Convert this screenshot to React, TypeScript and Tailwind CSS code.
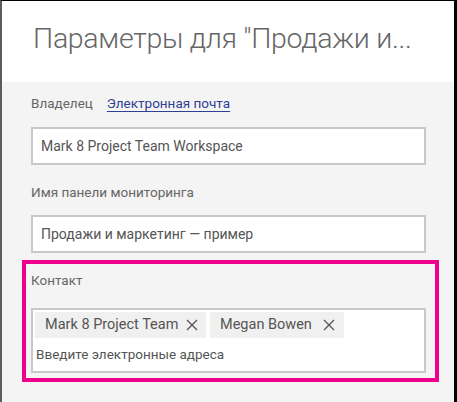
import React from "react";

function CloseIcon() {
  return (
    <svg width="12" height="12" viewBox="0 0 12 12" className="shrink-0">
      <path d="M1 1L11 11M11 1L1 11" stroke="#555" strokeWidth="1.3" fill="none" />
    </svg>
  );
}

export default function App() {
  const font = { fontFamily: 'Roboto, "Noto Sans", sans-serif' };
  return (
    <div
      className="flex h-[402px] w-[457px] flex-col border-t border-r-[3px] border-l-2 border-t-black border-r-black border-l-[#5c5c5c] bg-[#f4f4f4]"
      style={font}
    >
      <header className="h-[81px] shrink-0 bg-white pl-[31px] pt-[19px]">
        <h1 className="text-[28.5px] leading-[38px] font-light tracking-[-0.3px] whitespace-nowrap text-[#666]">
          Параметры для "Продажи и...
        </h1>
      </header>

      <div className="flex flex-col pl-[29px] pt-[11px]">
        <div className="flex h-[20px] items-center gap-[14px] text-[13.5px] text-[#666]">
          <span>Владелец</span>
          <span className="text-[#2f3f94] underline decoration-[#2f3f94] underline-offset-[3px]">
            Электронная почта
          </span>
        </div>

        <div className="mt-[14px] flex h-[38px] w-[395px] items-center border-2 border-[#c8c8c8] bg-white pl-[8px] text-[14px] whitespace-nowrap text-[#555]">
          Mark 8 Project Team Workspace
        </div>

        <div className="mt-[17px] h-[20px] text-[13.5px] leading-[20px] text-[#666]">
          Имя панели мониторинга
        </div>

        <div className="mt-[13px] flex h-[38px] w-[395px] items-center border-2 border-[#c8c8c8] bg-white pl-[8px] text-[14px] whitespace-nowrap text-[#555]">
          Продажи и маркетинг — пример
        </div>

        <div className="mt-[7px] -ml-[9px] w-[417px] border-4 border-[#ec008c] pt-[6px] pb-[5px] pl-[5px]">
          <div className="h-[20px] text-[13.5px] leading-[20px] text-[#666]">Контакт</div>
          <div className="mt-[18px] flex h-[65px] w-[395px] flex-col border-2 border-[#c8c8c8] bg-white px-[2px] pt-[2px]">
            <div className="flex gap-[4px]">
              <div className="flex h-[26px] w-[171px] items-center justify-between bg-[#f0f0f0] pr-[8px] pl-[10px] text-[14.5px] whitespace-nowrap text-[#555]">
                <span>Mark 8 Project Team</span>
                <CloseIcon />
              </div>
              <div className="flex h-[26px] w-[134px] items-center justify-between bg-[#f0f0f0] pr-[9px] pl-[10px] text-[14.5px] whitespace-nowrap text-[#555]">
                <span>Megan Bowen</span>
                <CloseIcon />
              </div>
            </div>
            <div className="mt-[6px] pl-[1px] text-[13.5px] leading-[20px] whitespace-nowrap text-[#555]">
              Введите электронные адреса
            </div>
          </div>
        </div>
      </div>
    </div>
  );
}
